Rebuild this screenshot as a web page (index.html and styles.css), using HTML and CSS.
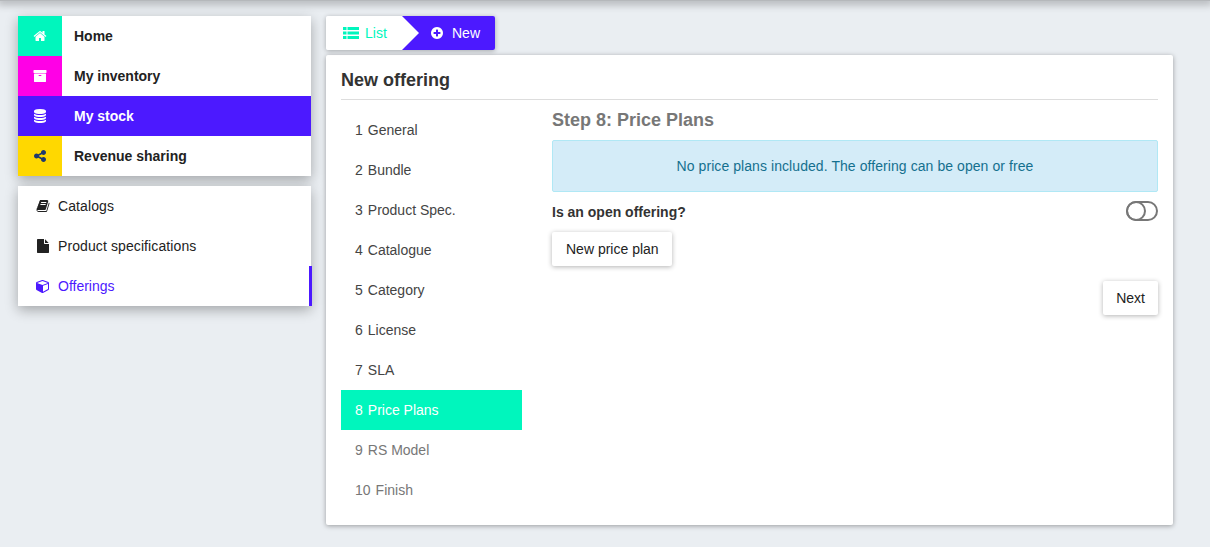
FILE: index.html
```html
<!DOCTYPE html>
<html lang="en">
<head>
    <meta charset="UTF-8">
    <meta name="viewport" content="width=device-width, initial-scale=1.0">
    <title>New offering</title>
    <link rel="stylesheet" href="styles.css">
</head>
<body>
    <div class="topbar"></div>

    <div class="page">
        <aside class="sidebar">
            <ul class="main-menu">
                <li class="main-item">
                    <span class="main-icon icon-home"><svg class="icon" viewBox="0 0 1792 1792"><path d="M1472 992v480q0 26-19 45t-45 19h-384v-384h-256v384h-384q-26 0-45-19t-19-45v-480q0-1 .5-3t.5-3l575-474 575 474q1 2 1 6zm223-69l-62 74q-8 9-21 11h-3q-13 0-21-7l-692-577-692 577q-12 8-24 7-13-2-21-11l-62-74q-8-10-7-23.500t11-21.500l719-599q32-26 76-26t76 26l244 204v-195q0-14 9-23t23-9h192q14 0 23 9t9 23v408l219 182q10 8 11 21.500t-7 23.500z"/></svg></span>
                    <span class="main-label">Home</span>
                </li>
                <li class="main-item">
                    <span class="main-icon icon-inventory"><svg class="icon" viewBox="0 0 1792 1792"><path fill-rule="evenodd" d="M1088 832q0-26-19-45t-45-19h-256q-26 0-45 19t-19 45 19 45 45 19h256q26 0 45-19t19-45zm576-192v960q0 26-19 45t-45 19h-1408q-26 0-45-19t-19-45v-960q0-26 19-45t45-19h1408q26 0 45 19t19 45zm64-448v256q0 26-19 45t-45 19h-1536q-26 0-45-19t-19-45v-256q0-26 19-45t45-19h1536q26 0 45 19t19 45z"/></svg></span>
                    <span class="main-label">My inventory</span>
                </li>
                <li class="main-item active">
                    <span class="main-icon icon-stock"><svg class="icon" viewBox="0 0 1792 1792"><path d="M896 768q237 0 443-43t325-127v170q0 69-103 128t-280 93.500-385 34.500-385-34.500-280-93.500-103-128v-170q119 84 325 127t443 43zm0 768q237 0 443-43t325-127v170q0 69-103 128t-280 93.500-385 34.500-385-34.500-280-93.500-103-128v-170q119 84 325 127t443 43zm0-384q237 0 443-43t325-127v170q0 69-103 128t-280 93.500-385 34.500-385-34.500-280-93.500-103-128v-170q119 84 325 127t443 43zm0-1152q208 0 385 34.500t280 93.500 103 128v128q0 69-103 128t-280 93.500-385 34.500-385-34.500-280-93.500-103-128v-128q0-69 103-128t280-93.500 385-34.500z"/></svg></span>
                    <span class="main-label">My stock</span>
                </li>
                <li class="main-item">
                    <span class="main-icon icon-sharing"><svg class="icon" viewBox="0 0 1792 1792"><path d="M1344 1024q133 0 226.500 93.500t93.500 226.500-93.500 226.500-226.500 93.500-226.500-93.500-93.500-226.500q0-12 2-34l-360-180q-92 86-218 86-133 0-226.500-93.500t-93.500-226.500 93.500-226.500 226.500-93.500q126 0 218 86l360-180q-2-22-2-34 0-133 93.500-226.500t226.500-93.500 226.500 93.500 93.500 226.500-93.500 226.500-226.500 93.500q-126 0-218-86l-360 180q2 22 2 34t-2 34l360 180q92-86 218-86z"/></svg></span>
                    <span class="main-label">Revenue sharing</span>
                </li>
            </ul>

            <ul class="sub-menu">
                <li class="sub-item">
                    <svg class="icon" viewBox="0 0 1792 1792"><path d="M1703 478q40 57 18 129l-275 906q-19 64-76.500 107.500t-122.500 43.500h-923q-77 0-148.500-53.500t-99.500-131.500q-24-67-2-127 0-4 3-27t4-37q1-8-3-21.500t-3-19.500q2-11 8-21t16.500-23.500 16.500-23.500q23-38 45-91.500t30-91.500q3-10 .5-30t-.5-28q3-11 17-28t17-23q21-36 42-92t25-90q1-9-2.500-32t.5-28q4-13 22-30.500t22-22.500q19-26 42.500-84.500t27.500-96.500q1-8-3-25.500t-2-26.500q2-8 9-18t18-23 17-21q8-12 16.500-30.500t15-35 16-36 19.500-32 26.500-23.500 36-11.500 47.500 5.500l-1 3q38-9 51-9h761q74 0 114 56t18 130l-274 906q-36 119-71.500 153.500t-128.500 34.500h-869q-27 0-38 15-11 16-1 43 24 70 144 70h923q29 0 56-15.500t35-41.500l300-987q7-22 5-57 38 15 59 43zm-1064 2q-4 13 2 22.500t20 9.500h608q13 0 25.500-9.500t16.500-22.500l21-64q4-13-2-22.500t-20-9.500h-608q-13 0-25.500 9.500t-16.500 22.500zm-83 256q-4 13 2 22.500t20 9.500h608q13 0 25.500-9.500t16.500-22.500l21-64q4-13-2-22.500t-20-9.500h-608q-13 0-25.500 9.500t-16.500 22.500z"/></svg>
                    <span>Catalogs</span>
                </li>
                <li class="sub-item">
                    <svg class="icon" viewBox="0 0 1792 1792"><path d="M1152 512v-472q22 14 36 28l408 408q14 14 28 36h-472zm-128 32q0 40 28 68t68 28h544v1056q0 40-28 68t-68 28h-1344q-40 0-68-28t-28-68v-1600q0-40 28-68t68-28h800v544z"/></svg>
                    <span>Product specifications</span>
                </li>
                <li class="sub-item active">
                    <svg class="icon" viewBox="0 0 1792 1792"><path d="M896 1629l640-349v-636l-640 233v752zm-64-865l698-254-698-254-698 254zm832-252v768q0 35-18 65t-49 47l-704 384q-28 16-61 16t-61-16l-704-384q-31-17-49-47t-18-65v-768q0-40 23-73t61-47l704-256q22-8 44-8t44 8l704 256q38 14 61 47t23 73z"/></svg>
                    <span>Offerings</span>
                </li>
            </ul>
        </aside>

        <main class="content">
            <div class="tabs">
                <div class="tab tab-list">
                    <svg class="icon" viewBox="0 0 16 14"><path d="M0 1h3.500v3H0zM4.500 1H16v3H4.500zM0 5.500h3.500v3H0zM4.500 5.500H16v3H4.500zM0 10h3.500v3H0zM4.500 10H16v3H4.500z"/></svg>
                    <span>List</span>
                </div>
                <div class="tab tab-new">
                    <svg class="icon" viewBox="0 0 1792 1792"><path fill-rule="evenodd" d="M1344 960v-128q0-26-19-45t-45-19h-256v-256q0-26-19-45t-45-19h-128q-26 0-45 19t-19 45v256h-256q-26 0-45 19t-19 45v128q0 26 19 45t45 19h256v256q0 26 19 45t45 19h128q26 0 45-19t19-45v-256h256q26 0 45-19t19-45zm320-64q0 209-103 385.500t-279.500 279.500-385.500 103-385.500-103-279.500-279.500-103-385.500 103-385.500 279.500-279.500 385.500-103 385.500 103 279.500 279.500 103 385.500z"/></svg>
                    <span>New</span>
                </div>
            </div>

            <section class="panel">
                <h2 class="panel-title">New offering</h2>
                <div class="panel-body">
                    <ol class="steps">
                        <li class="step"><span class="step-num">1</span>General</li>
                        <li class="step"><span class="step-num">2</span>Bundle</li>
                        <li class="step"><span class="step-num">3</span>Product Spec.</li>
                        <li class="step"><span class="step-num">4</span>Catalogue</li>
                        <li class="step"><span class="step-num">5</span>Category</li>
                        <li class="step"><span class="step-num">6</span>License</li>
                        <li class="step"><span class="step-num">7</span>SLA</li>
                        <li class="step current"><span class="step-num">8</span>Price Plans</li>
                        <li class="step todo"><span class="step-num">9</span>RS Model</li>
                        <li class="step todo"><span class="step-num">10</span>Finish</li>
                    </ol>

                    <div class="step-form">
                        <h3 class="step-title">Step 8: Price Plans</h3>
                        <div class="alert">No price plans included. The offering can be open or free</div>
                        <div class="switch-row">
                            <strong>Is an open offering?</strong>
                            <span class="switch"><span class="knob"></span></span>
                        </div>
                        <button class="btn btn-plan">New price plan</button>
                        <div class="next-row">
                            <button class="btn btn-next">Next</button>
                        </div>
                    </div>
                </div>
            </section>
        </main>
    </div>
</body>
</html>
```

FILE: styles.css
```css
* {
    box-sizing: border-box;
}
html, body {
    height: 100%;
}
body {
    margin: 0;
    background-color: #eaeef2;
    color: #222;
    font-family: "Liberation Sans", Arial, sans-serif;
    font-size: 14px;
    overflow: hidden;
}
ul, ol {
    list-style: none;
    margin: 0;
    padding: 0;
}
.icon {
    width: 14px;
    height: 14px;
    fill: currentColor;
    flex: none;
}
.topbar {
    height: 1px;
    background-color: #b5b8bb;
    box-shadow: 0 0 9px 3px rgba(0, 0, 0, 0.3);
}
.page {
    display: flex;
    gap: 15px;
    padding: 15px 0 0 18px;
}

/* sidebar */
.sidebar {
    width: 293px;
    flex: none;
}
.main-menu, .sub-menu {
    background-color: #fff;
    box-shadow: 0 4px 12px rgba(0, 0, 0, 0.3);
}
.main-menu {
    margin-bottom: 10px;
}
.main-item {
    display: flex;
    align-items: center;
    height: 40px;
    font-weight: bold;
}
.main-icon {
    display: flex;
    align-items: center;
    justify-content: center;
    width: 44px;
    height: 100%;
    margin-right: 12px;
    color: #fff;
}
.icon-home {
    background-color: #00f6bd;
}
.icon-inventory {
    background-color: #ff00e6;
}
.icon-stock {
    background-color: #4c19ff;
}
.icon-sharing {
    background-color: #ffd800;
    color: #1f3a6e;
}
.main-item.active {
    background-color: #4c19ff;
    color: #fff;
}
.sub-item {
    display: flex;
    align-items: center;
    gap: 8px;
    height: 40px;
    padding-left: 18px;
    letter-spacing: 0.1px;
}
.sub-item.active {
    color: #4c19ff;
    box-shadow: inset -3px 0 0 #4c19ff;
    margin-right: -1px;
    letter-spacing: 0;
}

/* tabs */
.content {
    width: 847px;
    flex: none;
}
.tabs {
    display: inline-flex;
    height: 34px;
    margin-bottom: 5px;
    vertical-align: top;
    box-shadow: 0 1px 5px rgba(0, 0, 0, 0.3);
    border-radius: 2px;
    overflow: hidden;
}
.tab {
    display: flex;
    align-items: center;
    gap: 8px;
}
.tab-list {
    position: relative;
    width: 76px;
    gap: 6px;
    padding-left: 17px;
    background-color: #fff;
    color: #00f6bd;
}
.tab-list::after {
    content: "";
    position: absolute;
    top: 0;
    left: 100%;
    border-top: 17px solid transparent;
    border-bottom: 17px solid transparent;
    border-left: 17px solid #fff;
}
.tab-new {
    width: 93px;
    padding-left: 28px;
    background-color: #4c19ff;
    color: #fff;
}
.tab-list .icon {
    width: 16px;
}

/* panel */
.panel {
    height: 470px;
    padding: 15px;
    background-color: #fff;
    border-radius: 2px;
    box-shadow: 0 1px 5px rgba(0, 0, 0, 0.35);
}
.panel-title {
    margin: 0;
    height: 30px;
    border-bottom: 1px solid #ddd;
    color: #333;
    font-size: 18px;
    line-height: 20px;
}
.panel-body {
    display: flex;
    gap: 30px;
    margin-top: 10px;
}
.steps {
    width: 181px;
    flex: none;
}
.step {
    height: 40px;
    padding-left: 14px;
    line-height: 40px;
    color: #444;
}
.step-num {
    margin-right: 5px;
}
.step.current {
    background-color: #00f6bd;
    color: #fff;
}
.step.todo {
    color: #777;
}
.step-form {
    flex: 1;
}
.step-title {
    margin: 0 0 10px;
    height: 20px;
    color: #777;
    font-size: 18px;
    line-height: 20px;
}
.alert {
    height: 52px;
    border: 1px solid #b0e8f5;
    border-radius: 2px;
    background-color: #d4ecf8;
    color: #14708f;
    letter-spacing: 0.07px;
    line-height: 50px;
    text-align: center;
}
.switch-row {
    display: flex;
    align-items: center;
    justify-content: space-between;
    height: 20px;
    margin: 10px 0 10px;
    color: #333;
}
.switch {
    display: block;
    width: 32px;
    height: 20px;
    margin-top: -2px;
    border: 2px solid #777;
    border-radius: 10px;
}
.knob {
    display: block;
    width: 20px;
    height: 20px;
    margin: -2px;
    border: 2px solid #777;
    border-radius: 50%;
}
.btn {
    display: block;
    height: 34px;
    padding: 0 13px;
    border: none;
    border-radius: 2px;
    background-color: #fff;
    color: #222;
    font-family: inherit;
    font-size: 14px;
    box-shadow: 0 1px 5px rgba(0, 0, 0, 0.3);
}
.btn-plan {
    padding: 0 13px 0 14px;
}
.btn-next {
    padding: 0 13px;
}
.next-row {
    display: flex;
    justify-content: flex-end;
    margin-top: 15px;
}
```
